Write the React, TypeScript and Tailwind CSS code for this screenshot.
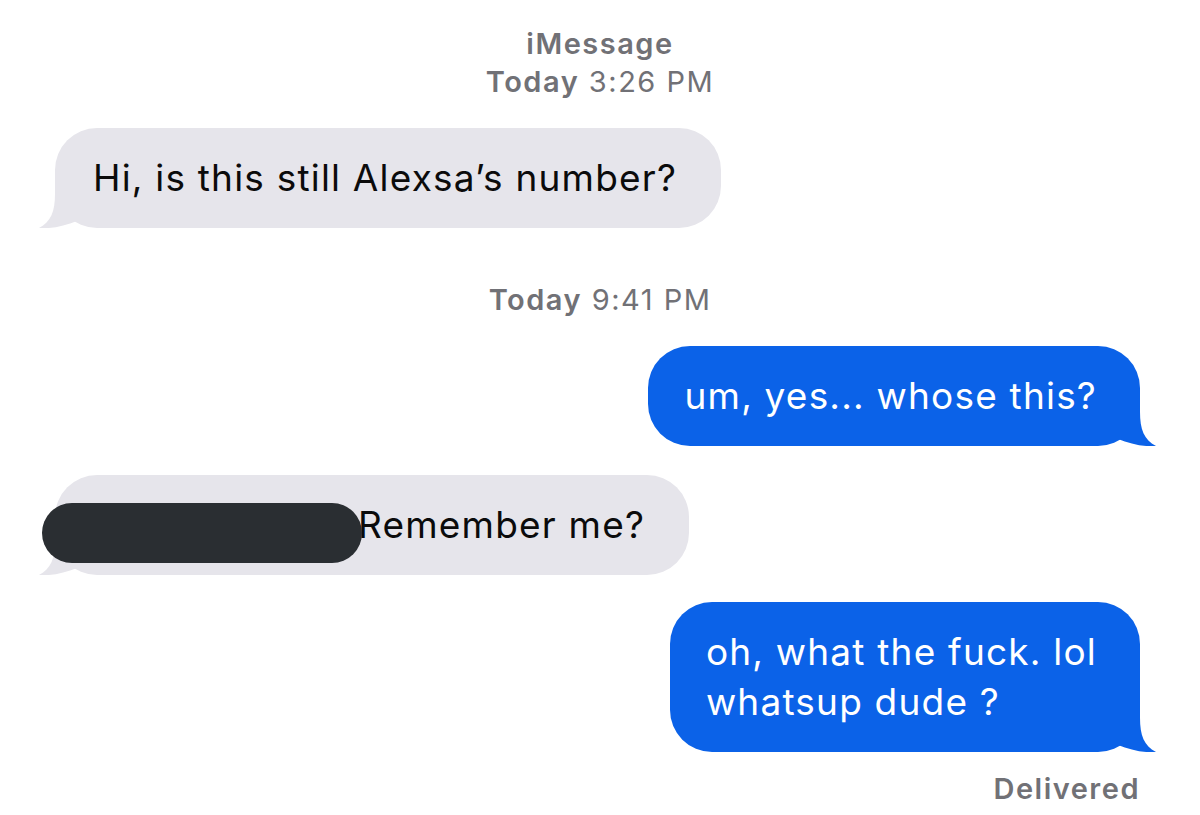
import React from "react";

const FONT = { fontFamily: "Inter, 'Noto Sans', 'Liberation Sans', sans-serif" };

function Tail({ color, side }: { color: string; side: "left" | "right" }) {
  // tail hangs off the bottom corner, mirrored for sent messages
  return (
    <svg
      width="58"
      height="50"
      viewBox="0 0 58 50"
      className={`absolute bottom-0 ${side === "left" ? "left-[-16px]" : "right-[-16px] scale-x-[-1]"}`}
    >
      <path d="M16 0 L16 16 C16 33 12 44 0 50 C12 51 26 48 38 43 L58 43 L58 0 Z" fill={color} />
    </svg>
  );
}

function Received({ children }: { children: React.ReactNode }) {
  return (
    <div className="flex justify-start pl-[55px]">
      <div className="relative rounded-[42px] bg-[#e6e5eb] pl-[38px] pr-[44px] py-[25px] text-[37px] leading-[50px] tracking-[1.2px] text-[#0b0b0b]">
        <Tail color="#e6e5eb" side="left" />
        <div className="relative">{children}</div>
      </div>
    </div>
  );
}

function Sent({ children }: { children: React.ReactNode }) {
  return (
    <div className="flex justify-end pr-[60px]">
      <div className="relative rounded-[42px] bg-[#0b62e8] pl-[36px] pr-[43px] py-[25px] text-[37px] leading-[50px] tracking-[1.2px] text-white">
        <Tail color="#0b62e8" side="right" />
        <div className="relative">{children}</div>
      </div>
    </div>
  );
}

function Stamp({ day, time }: { day: string; time: string }) {
  return (
    <p className="text-center text-[29px] leading-[38px] tracking-[1.5px] text-[#717176]">
      <span className="font-semibold">{day}</span> {time}
    </p>
  );
}

export default function App() {
  return (
    <div className="w-[1200px] h-[815px] bg-white overflow-hidden pt-[25px]" style={FONT}>
      <p className="text-center text-[29px] leading-[38px] tracking-[1.5px] font-semibold text-[#717176]">iMessage</p>
      <Stamp day="Today" time="3:26 PM" />

      <div className="mt-[27px]">
        <Received>Hi, is this still Alexsa’s number?</Received>
      </div>

      <div className="mt-[53px]">
        <Stamp day="Today" time="9:41 PM" />
      </div>

      <div className="mt-[27px]">
        <Sent>um, yes... whose this?</Sent>
      </div>

      <div className="mt-[29px]">
        <Received>
          <span className="inline-block w-[265px]" />
          Remember me?
          {/* redacted name */}
          <span className="absolute left-[-51px] top-[3px] w-[320px] h-[60px] rounded-[30px] bg-[#2a2e32]" />
        </Received>
      </div>

      <div className="mt-[27px]">
        <Sent>
          oh, what the fuck. lol
          <br />
          whatsup dude ?
        </Sent>
      </div>

      <p className="mt-[18px] pr-[60px] text-right text-[29px] leading-[38px] tracking-[1.5px] font-semibold text-[#717176]">Delivered</p>
    </div>
  );
}
